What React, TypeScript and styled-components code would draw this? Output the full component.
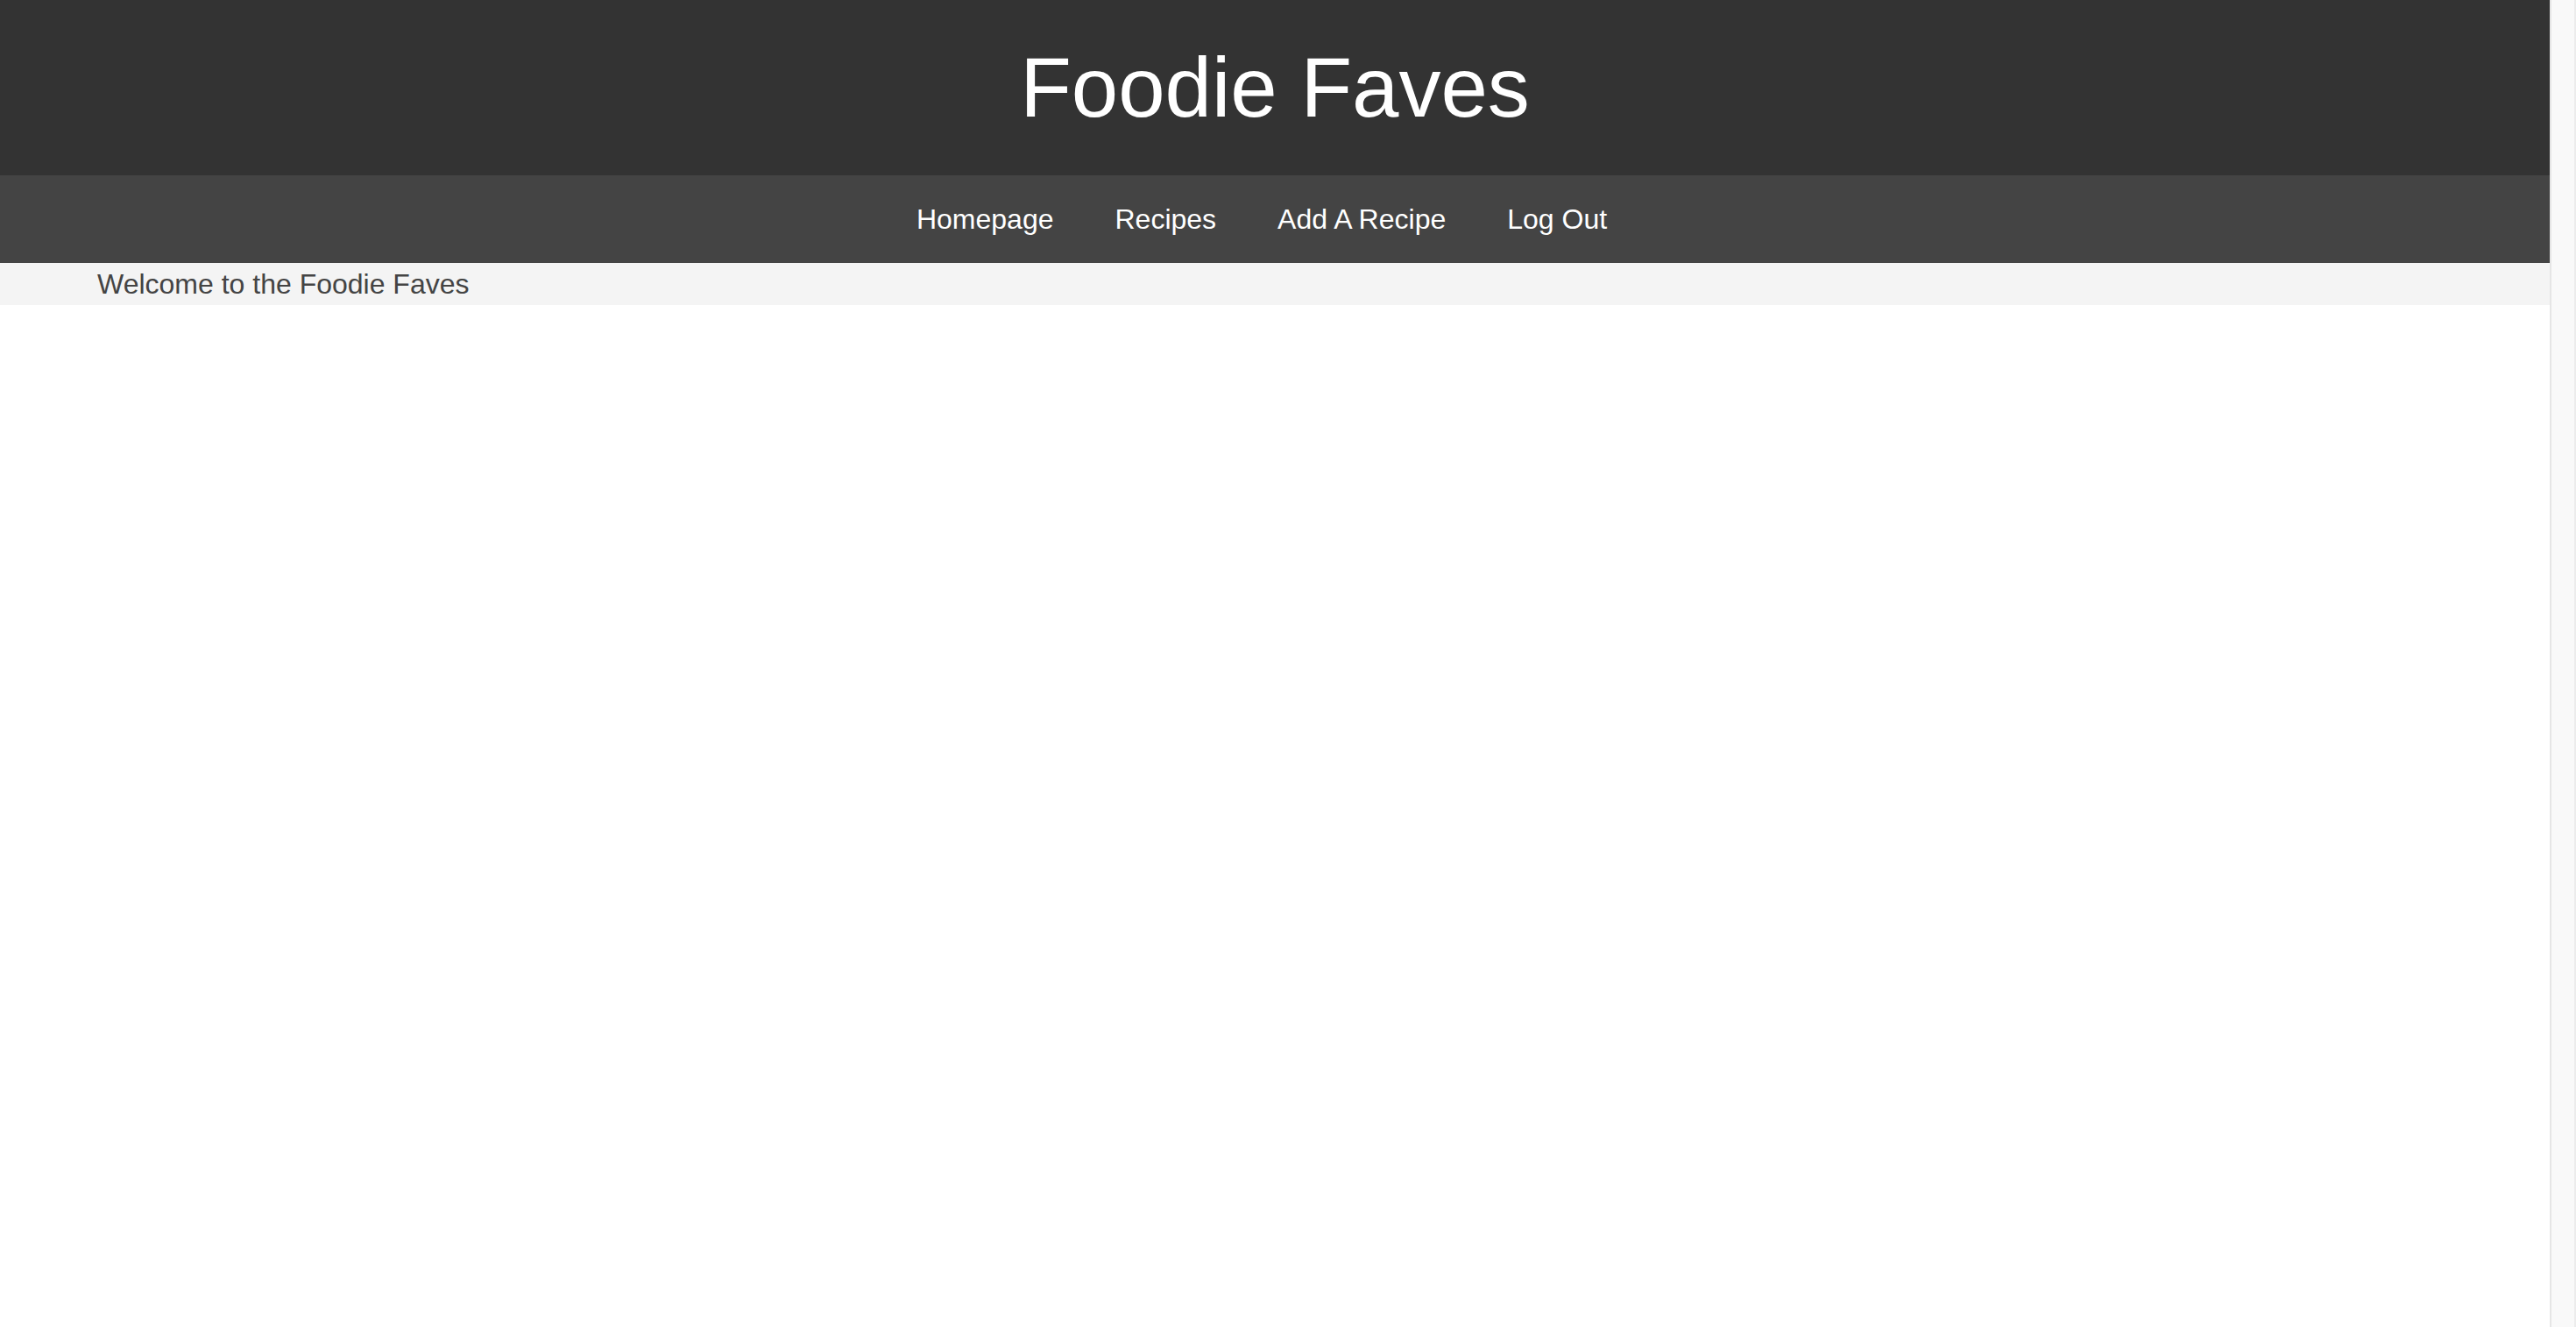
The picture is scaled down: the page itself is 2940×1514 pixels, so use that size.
import React from "react";
import styled, { createGlobalStyle } from "styled-components";

const GlobalStyle = createGlobalStyle`
  html, body {
    margin: 0;
    height: 100%;
    overflow: hidden;
  }
  body {
    background: #ffffff;
    font-family: "Liberation Sans", Arial, sans-serif;
  }
  #root {
    height: 100%;
  }
`;

const Page = styled.div`
  display: grid;
  grid-template-columns: 1fr 30px;
  height: 100%;
`;

const Main = styled.div`
  min-width: 0;
  background: #ffffff;
`;

const ScrollGutter = styled.div`
  background: #f9f9f9;
  border-left: 2px solid #e6e6e6;
  border-right: 2px solid #ececec;
`;

const Header = styled.header`
  height: 200px;
  background: #333333;
  display: flex;
  align-items: center;
  justify-content: center;
`;

const Title = styled.h1`
  margin: 0;
  font-size: 96px;
  font-weight: 400;
  color: #ffffff;
  line-height: normal;
`;

const Nav = styled.nav`
  height: 100px;
  background: #444444;
  display: flex;
  align-items: center;
  justify-content: center;
  padding-right: 30px;
`;

const NavLink = styled.a`
  color: #ffffff;
  text-decoration: none;
  font-size: 32px;
  padding: 0 35px;
  cursor: pointer;
`;

const Welcome = styled.div`
  background: #f4f4f4;
  color: #444444;
  font-size: 32px;
  padding: 5.5px 0 5.5px 111px;
  line-height: normal;
`;

export default function App() {
  const links = ["Homepage", "Recipes", "Add A Recipe", "Log Out"];
  return (
    <>
      <GlobalStyle />
      <Page>
        <Main>
          <Header>
            <Title>Foodie Faves</Title>
          </Header>
          <Nav>
            {links.map((l) => (
              <NavLink key={l} href="#">
                {l}
              </NavLink>
            ))}
          </Nav>
          <Welcome>Welcome to the Foodie Faves</Welcome>
        </Main>
        <ScrollGutter />
      </Page>
    </>
  );
}
